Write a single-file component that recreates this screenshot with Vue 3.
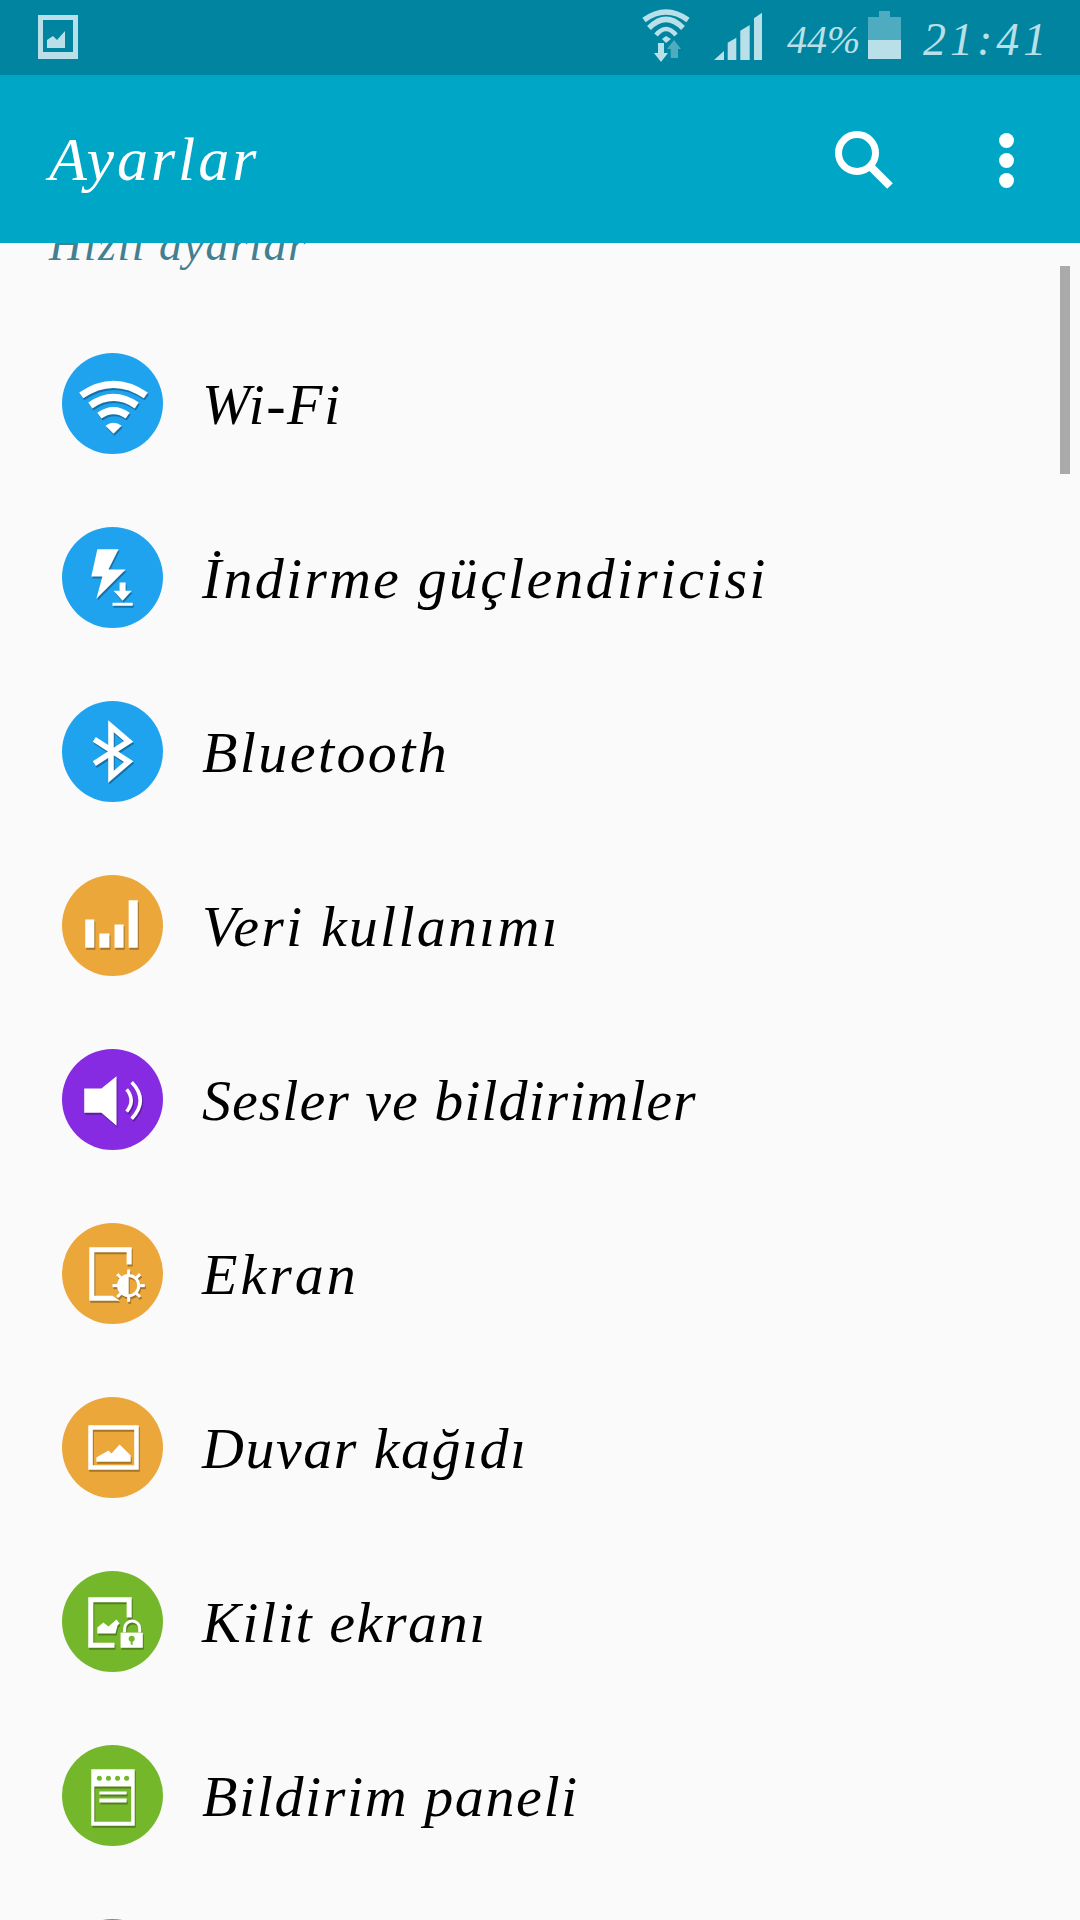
<script setup>
const rows = [
  { icon: 'wifi', label: 'Wi-Fi', color: '#1fa3ef', spacing: 1.5 },
  { icon: 'boost', label: 'İndirme güçlendiricisi', color: '#1fa3ef', spacing: 2.2 },
  { icon: 'bt', label: 'Bluetooth', color: '#1fa3ef', spacing: 2.4 },
  { icon: 'data', label: 'Veri kullanımı', color: '#eba73a', spacing: 2.2 },
  { icon: 'sound', label: 'Sesler ve bildirimler', color: '#862be1', spacing: 1 },
  { icon: 'display', label: 'Ekran', color: '#eba73a', spacing: 3 },
  { icon: 'wall', label: 'Duvar kağıdı', color: '#eba73a', spacing: 1.5 },
  { icon: 'lock', label: 'Kilit ekranı', color: '#75b72b', spacing: 1.6 },
  { icon: 'panel', label: 'Bildirim paneli', color: '#75b72b', spacing: 1.6 },
  { icon: 'none', label: '', color: '#1fa3ef', spacing: 2 }
]
const rays = [0, 45, 90, 135, 180, 225, 270, 315]
</script>

<template>
  <div class="screen">
    <div class="status">
      <svg class="st-pic" viewBox="0 0 40 44" width="40" height="44">
        <path fill-rule="evenodd" d="M0 0H40V44H0ZM5 5V37H35V5Z" fill="#b9e0e8" />
        <path d="M9 33V25L15 21L19 25L27 16V33Z" fill="#b9e0e8" />
      </svg>
      <svg class="st-wifi" viewBox="0 0 52 60" width="52" height="60">
        <g fill="none" stroke="#b9e0e8">
          <path d="M4 15Q26 -1 48 15" stroke-width="5.500" />
          <path d="M9 23Q26 6 43 23" stroke-width="5.500" />
          <path d="M16 30Q26 18 36 30" stroke-width="4.500" />
        </g>
        <path d="M22 34L26 31L31 34L26 38Z" fill="#b9e0e8" />
        <path d="M30.700 53V44H27L34 35L41 44H38V53Z" fill="#4fabbf" />
        <path d="M18 38H24V48H28L21 57L14 48H18Z" fill="#b9e0e8" />
      </svg>
      <svg class="st-signal" viewBox="0 0 48 48" width="48" height="48">
        <path d="M0 48L10 39V48ZM13.700 30.700L22.300 25.700V48H13.700ZM26.300 18.700L35.700 13V48H26.300ZM40 6.300L48 .7V48H40Z" fill="#b9e0e8" />
      </svg>
      <span class="st-pct">44%</span>
      <div class="battery">
        <div class="battery-cap"></div>
        <div class="battery-empty"></div>
        <div class="battery-fill"></div>
      </div>
      <span class="st-time">21:41</span>
    </div>

    <header class="appbar">
      <span class="title">Ayarlar</span>
      <svg class="search" viewBox="0 0 60 60" width="60" height="60">
        <circle cx="23" cy="23" r="18.500" fill="none" stroke="#fff" stroke-width="7" />
        <path d="M36 36L56 56" fill="none" stroke="#fff" stroke-width="8" />
      </svg>
      <div class="more">
        <i></i><i></i><i></i>
      </div>
    </header>

    <main class="list">
      <div class="section">Hızlı ayarlar</div>
      <div v-for="row in rows" :key="row.icon" class="row">
        <div class="badge" :style="{ background: row.color }">
          <svg class="glyph" viewBox="0 0 100 100" width="101" height="101">
            <g v-if="row.icon === 'wifi'">
              <g fill="none" stroke="#fff" stroke-width="7">
                <path d="M19 42Q51 20 83 42" />
                <path d="M28 52Q51 36 74 52" />
                <path d="M37 62Q51 52 65 62" />
              </g>
              <path d="M43 72Q51 66 59 72L51 80Z" fill="#fff" />
            </g>
            <g v-else-if="row.icon === 'boost'" fill="#fff">
              <path d="M35 22H56L46 42H63L34 71L40 49H29Z" />
              <path d="M57 55H63V63H69L60 73L51 63H57ZM50 75H70V78H50Z" />
            </g>
            <path v-else-if="row.icon === 'bt'" d="M32 38L66 60L48.500 75V25L66 40L32 62" fill="none" stroke="#fff" stroke-width="5.500" />
            <path v-else-if="row.icon === 'data'" d="M23 44H32V72H23ZM37 58H47V72H37ZM52 49H61V72H52ZM66 25H75V72H66Z" fill="#fff" />
            <g v-else-if="row.icon === 'sound'">
              <path d="M22 39H39L54 27V76L39 63H22Z" fill="#fff" />
              <path d="M64 40Q73 51 64 62M69 33Q86 51 69 69" fill="none" stroke="#fff" stroke-width="3.500" />
            </g>
            <g v-else-if="row.icon === 'display'">
              <path d="M27 24H69V41H64V29H32V72H50L57 77H27Z" fill="#fff" />
              <circle cx="66" cy="62" r="10" fill="none" stroke="#fff" stroke-width="3" />
              <path d="M66 52A10 10 0 0 0 66 72Z" fill="#fff" />
              <path v-for="a in rays" :key="a" d="M66 51V46" stroke="#fff" stroke-width="3" :transform="`rotate(${a} 66 62)`" />
            </g>
            <g v-else-if="row.icon === 'wall'" fill="#fff">
              <path fill-rule="evenodd" d="M26 28H76V72H26ZM30.500 32.500V67.500H71.500V32.500Z" />
              <path d="M34 60L46 53L49 56L57 47L68 58V64H34Z" />
            </g>
            <g v-else-if="row.icon === 'lock'">
              <path d="M26 26H69V46H64V31H31V71H52V76H26Z" fill="#fff" />
              <path d="M35 62V56L41 51L46 55L54 48L57 52L55 54L53 62Z" fill="#fff" />
              <path d="M62 61V57A7.500 7.500 0 0 1 77 57V61" fill="none" stroke="#fff" stroke-width="3" />
              <path d="M58 61H80V76H58Z" fill="#fff" />
              <circle cx="69" cy="67" r="3" fill="#75b72b" />
              <path d="M68 67H70V73H68Z" fill="#75b72b" />
            </g>
            <g v-else-if="row.icon === 'panel'">
              <path fill-rule="evenodd" d="M29 24H72V80H29ZM32 41V76H68.500V41Z" fill="#fff" />
              <circle cx="37" cy="33" r="2.500" fill="#75b72b" />
              <circle cx="46" cy="33" r="2.500" fill="#75b72b" />
              <circle cx="55" cy="33" r="2.500" fill="#75b72b" />
              <circle cx="64" cy="33" r="2.500" fill="#75b72b" />
              <path d="M37 46H64V49H37ZM37 53H64V57H37Z" fill="#fff" />
            </g>
          </svg>
        </div>
        <span class="label" :style="{ letterSpacing: row.spacing + 'px' }">{{ row.label }}</span>
      </div>
    </main>

    <div class="scrollbar"></div>
  </div>
</template>

<style scoped>
.screen {
  position: relative;
  width: 1080px;
  height: 1920px;
  overflow: hidden;
  background: #fafafa;
  font-family: "Liberation Serif", serif;
  font-style: italic;
}
.status {
  display: flex;
  align-items: flex-start;
  height: 75px;
  background: #00849f;
  color: #b9e0e8;
}
.st-pic { margin: 15px 0 0 38px; }
.st-wifi { margin: 5px 0 0 562px; }
.st-signal { margin: 12px 0 0 22px; }
.st-pct {
  width: 81px;
  margin-left: 25px;
  padding-top: 20px;
  font-size: 40px;
  line-height: 40px;
}
.battery {
  display: flex;
  flex-direction: column;
  align-items: center;
  width: 33px;
  margin-top: 11px;
}
.battery-cap { width: 11px; height: 6px; background: #4fabbf; }
.battery-empty { width: 33px; height: 23px; background: #4fabbf; }
.battery-fill { width: 33px; height: 19px; background: #b9e0e8; }
.st-time {
  margin-left: 22px;
  padding-top: 16px;
  font-size: 46px;
  line-height: 48px;
  letter-spacing: 4px;
}
.appbar {
  position: relative;
  z-index: 1;
  display: flex;
  align-items: center;
  height: 168px;
  padding-left: 49px;
  background: #00a6c6;
  color: #fff;
}
.title {
  width: 785px;
  font-size: 62px;
  line-height: 72px;
  letter-spacing: 3px;
}
.search { margin-top: 2px; }
.more {
  display: flex;
  flex-direction: column;
  gap: 5px;
  margin: 2px 0 0 105px;
}
.more i {
  display: block;
  width: 15px;
  height: 15px;
  border-radius: 50%;
  background: #fff;
}
.list { margin-top: -28px; }
.section {
  height: 101px;
  padding-left: 49px;
  color: #427f90;
  font-size: 46px;
  line-height: 60px;
  letter-spacing: 1.500px;
}
.row {
  display: flex;
  align-items: center;
  gap: 39px;
  height: 174px;
  padding-left: 62px;
}
.badge {
  flex: none;
  width: 101px;
  height: 101px;
  border-radius: 50%;
}
.glyph {
  display: block;
  filter: drop-shadow(1px 2px 0 rgba(0, 0, 0, 0.3));
}
.label {
  padding-top: 4px;
  color: #000;
  font-size: 58px;
  line-height: 70px;
}
.scrollbar {
  position: absolute;
  top: 266px;
  right: 10px;
  width: 10px;
  height: 208px;
  background: #aaa;
}
</style>

<style>
body { background: #fafafa; }
</style>
